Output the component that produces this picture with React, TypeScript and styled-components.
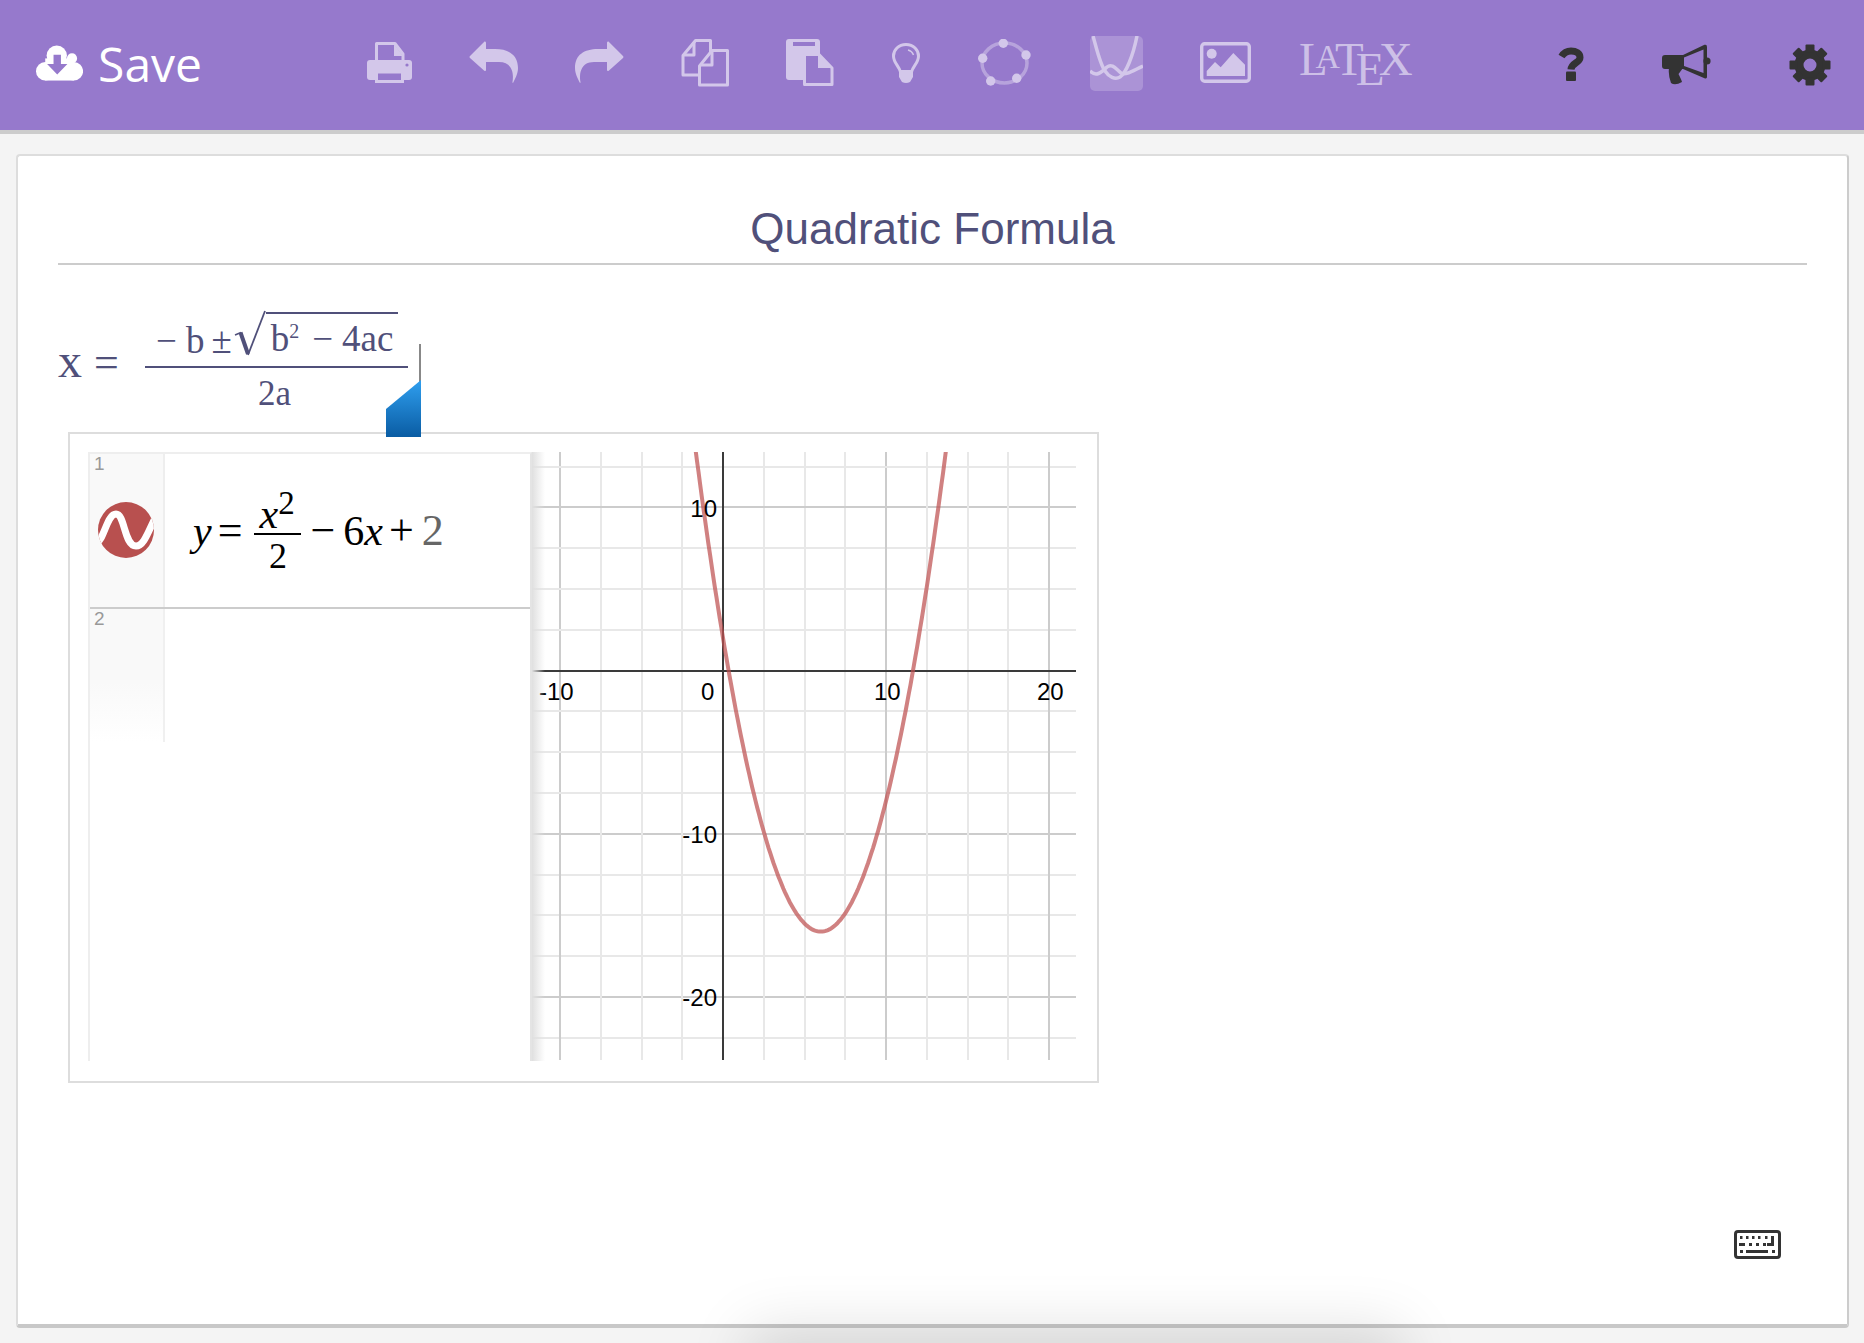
import React from "react";
import styled, { createGlobalStyle } from "styled-components";

const purple = "#9679cc";
const lightIcon = "#d3c7ea";
const darkIcon = "#333333";
const mathInk = "#50507a";

const GlobalStyle = createGlobalStyle`
  html, body {
    margin: 0;
    padding: 0;
    background: #f4f4f4;
    font-family: "Liberation Sans", Arial, sans-serif;
  }
`;

const Page = styled.div`
  position: relative;
  width: 1864px;
  height: 1343px;
  overflow: hidden;
  display: flex;
  flex-direction: column;
`;

const Toolbar = styled.header`
  display: flex;
  align-items: flex-start;
  box-sizing: border-box;
  height: 134px;
  flex-shrink: 0;
  padding-left: 36px;
  background: ${purple};
  border-bottom: 4px solid #cccccc;
`;

const SaveButton = styled.div`
  display: flex;
  align-items: center;
  width: 166px;
  height: 126px;
  color: #ffffff;
  font-family: "Open Sans", sans-serif;
  font-size: 48px;
  font-weight: 400;
  gap: 15px;
`;

const ToolIcon = styled.svg<{ $gap: number; $top: number; $flip?: boolean }>`
  display: block;
  flex-shrink: 0;
  margin-left: ${(p) => p.$gap}px;
  margin-top: ${(p) => p.$top}px;
  transform: ${(p) => (p.$flip ? "scaleX(-1)" : "none")};
`;

const LatexMark = styled.div`
  flex-shrink: 0;
  margin-left: 48px;
  margin-top: 31px;
  color: #cdc0e7;
  font-family: "Liberation Serif", serif;
  font-size: 47px;
  line-height: 52px;
  white-space: nowrap;
`;

const LatexA = styled.span`
  font-size: 0.72em;
  vertical-align: 0.2em;
  margin-left: -0.36em;
  margin-right: -0.15em;
`;

const LatexE = styled.span`
  display: inline-block;
  vertical-align: -0.22em;
  margin-left: -0.1667em;
  margin-right: -0.125em;
`;

const Card = styled.main`
  position: relative;
  box-sizing: border-box;
  width: 1833px;
  height: 1174px;
  margin: 20px 0 0 16px;
  padding: 0 40px;
  background: #ffffff;
  border: 2px solid #dddddd;
  border-right-color: #cccccc;
  border-bottom: 4px solid #c8c8c8;
  border-radius: 4px;
`;

const Title = styled.h1`
  box-sizing: border-box;
  height: 109px;
  margin: 0;
  padding-top: 48px;
  border-bottom: 2px solid #cccccc;
  color: ${mathInk};
  font-size: 44px;
  font-weight: 400;
  line-height: 50px;
  text-align: center;
`;

const MathLine = styled.div`
  position: relative;
  display: flex;
  align-items: flex-start;
  height: 167px;
  color: ${mathInk};
  font-family: "Liberation Serif", serif;
`;

const MathLead = styled.div`
  display: flex;
  align-items: baseline;
  gap: 12px;
  width: 87px;
  height: 50px;
  margin-top: 71px;
  line-height: 50px;
`;

const BigX = styled.span`
  font-size: 48px;
`;

const BigEquals = styled.span`
  font-size: 44px;
`;

const Fraction = styled.div`
  display: flex;
  flex-direction: column;
  align-items: stretch;
  width: 263px;
  margin-top: 46px;
`;

const Numerator = styled.div`
  display: flex;
  align-items: flex-start;
  box-sizing: border-box;
  height: 57px;
  padding-left: 11px;
  border-bottom: 2px solid ${mathInk};
  font-size: 37px;
  line-height: 48px;
`;

const NumTerm = styled.span<{ $gap?: number }>`
  margin-top: 6px;
  margin-left: ${(p) => p.$gap ?? 0}px;
`;

const Radical = styled.svg`
  display: block;
  margin-top: -1px;
  margin-left: 2px;
  flex-shrink: 0;
`;

const Radicand = styled.div`
  display: flex;
  box-sizing: border-box;
  width: 132px;
  height: 47px;
  margin-top: 1px;
  padding-left: 5px;
  border-top: 2px solid ${mathInk};
  white-space: nowrap;
  line-height: 50px;
`;

const RadSup = styled.span`
  font-size: 20px;
  line-height: 34px;
`;

const RadTerm = styled.span<{ $gap: number }>`
  margin-left: ${(p) => p.$gap}px;
`;

const Denominator = styled.div`
  text-align: center;
  font-size: 35px;
  line-height: 52px;
  padding-right: 4px;
`;

const Caret = styled.div`
  position: absolute;
  left: 361px;
  top: 79px;
  width: 2px;
  height: 38px;
  background: #888888;
`;

const Handle = styled.div`
  position: absolute;
  left: 328px;
  top: 115px;
  width: 35px;
  height: 57px;
  z-index: 2;
  background: linear-gradient(#2f9fef, #0a5ca3);
  clip-path: polygon(100% 0, 100% 100%, 0 100%, 0 51%);
`;

const GraphWidget = styled.section`
  display: flex;
  box-sizing: border-box;
  width: 1031px;
  height: 651px;
  margin-left: 10px;
  padding: 18px 20px 20px 18px;
  border: 2px solid #dddddd;
`;

const ExpressionList = styled.div`
  display: flex;
  flex-direction: column;
  box-sizing: border-box;
  width: 444px;
  flex-shrink: 0;
  border: solid #eeeeee;
  border-width: 2px 2px 0 2px;
  border-right-color: #e4e4e4;
`;

const ExpressionRow = styled.div<{ $grow?: boolean }>`
  display: flex;
  box-sizing: border-box;
  height: ${(p) => (p.$grow ? "auto" : "155px")};
  flex: ${(p) => (p.$grow ? "1" : "none")};
  border-bottom: ${(p) => (p.$grow ? "none" : "2px solid #cccccc")};
`;

const Gutter = styled.div<{ $fade?: boolean }>`
  position: relative;
  box-sizing: border-box;
  width: 75px;
  flex-shrink: 0;
  height: ${(p) => (p.$fade ? "133px" : "auto")};
  padding: 0 0 0 4px;
  color: #999999;
  font-size: 19px;
  line-height: 20px;
  background: ${(p) => (p.$fade ? "linear-gradient(#f9f9f9 55%, #ffffff)" : "#f9f9f9")};
  border-right: 2px solid ${(p) => (p.$fade ? "#f0f0f0" : "#eeeeee")};
`;

const FunctionBadge = styled.svg`
  position: absolute;
  left: 8px;
  top: 48px;
`;

const Equation = styled.div`
  display: flex;
  align-items: center;
  padding-left: 28px;
  color: #000000;
  font-family: "Liberation Serif", serif;
  font-size: 42px;
  line-height: 44px;
`;

const EqVar = styled.span<{ $gap?: number }>`
  font-style: italic;
  margin-left: ${(p) => p.$gap ?? 0}px;
`;

const EqDigit = styled.span<{ $gap: number }>`
  margin-left: ${(p) => p.$gap}px;
`;

const EqOp = styled.span<{ $gap?: number; $muted?: boolean }>`
  font-size: 44px;
  margin-left: ${(p) => p.$gap ?? 0}px;
  color: ${(p) => (p.$muted ? "#666666" : "inherit")};
`;

const EqFraction = styled.div`
  display: flex;
  flex-direction: column;
  align-items: center;
  width: 47px;
  margin-left: 12px;
  margin-right: 9px;
  padding-top: 4px;
`;

const EqTop = styled.div`
  box-sizing: border-box;
  width: 100%;
  height: 46px;
  padding-left: 5px;
  border-bottom: 2px solid #000000;
  white-space: nowrap;
  line-height: 50px;
`;

const EqSup = styled.span`
  font-size: 33px;
  vertical-align: 14px;
  line-height: 0;
`;

const EqBottom = styled.div`
  font-size: 36px;
  line-height: 42px;
`;

const GraphPanel = styled.div`
  position: relative;
  flex: 1;
  min-width: 0;
  &::before {
    content: "";
    position: absolute;
    left: 0;
    top: 0;
    bottom: 0;
    width: 13px;
    background: linear-gradient(to right, #e0e0e0, rgba(255, 255, 255, 0));
  }
`;

const ChartSvg = styled.svg`
  display: block;
`;

const KeyboardButton = styled.svg`
  position: absolute;
  right: 66px;
  bottom: 65px;
`;

const BottomGlow = styled.div`
  position: absolute;
  left: 770px;
  top: 1352px;
  width: 610px;
  height: 40px;
  box-shadow: 0 0 60px 22px rgba(0, 0, 0, 0.13);
  pointer-events: none;
`;

const CloudIcon = () => (
  <svg width="51" height="38" viewBox="0 0 51 38" fill="#ffffff">
    <circle cx="22.5" cy="11" r="11" />
    <circle cx="39" cy="14" r="5.5" />
    <circle cx="10" cy="28" r="10" />
    <circle cx="41" cy="28" r="10" />
    <rect x="10" y="14" width="31" height="24" />
    <path d="M19 10H27V20H34L23 31.5L12 20H19Z" fill={purple} />
  </svg>
);

const PrintIcon = () => (
  <ToolIcon $gap={165} $top={42} width="45" height="41" viewBox="0 0 45 41">
    <path d="M9.5 20V1.5H28L36 12V20" fill={purple} stroke={lightIcon} strokeWidth="3" strokeLinejoin="round" />
    <path d="M27 2V14H36Z" fill={lightIcon} />
    <rect x="0" y="18" width="45" height="20" rx="3" fill={lightIcon} />
    <rect x="9.5" y="30" width="26" height="9.5" fill={purple} stroke={lightIcon} strokeWidth="3" />
    <circle cx="40" cy="23" r="1.6" fill={purple} />
  </ToolIcon>
);

const arrowPath =
  "M15.5 .6Q17 0 17 2V8H26C40 8 49 14 49 27C49 33 46 38 44 42C43.6 42 43.4 41.6 43.5 41C45 32 43 21 30 21H17V28.500Q17 31 15 29.500L1 17Q0 16 1 15Z";

const ReplyIcon = ({ gap, flip }: { gap: number; flip?: boolean }) => (
  <ToolIcon $gap={gap} $top={41} $flip={flip} width="49" height="42" viewBox="0 0 49 42">
    <path d={arrowPath} fill={lightIcon} />
  </ToolIcon>
);

const CopyIcon = () => (
  <ToolIcon $gap={57} $top={39} width="49" height="48" viewBox="0 0 49 48" fill="none" stroke={lightIcon} strokeWidth="3" strokeLinejoin="round">
    <path d="M17 36H2V16.500L14.500 1.500H29.500V13" />
    <path d="M13 3V16H3" />
    <path d="M31 11.500H46.500V46H18.500V27Z" />
    <path d="M31 13V26H20" />
  </ToolIcon>
);

const PasteIcon = () => (
  <ToolIcon $gap={56} $top={39} width="48" height="48" viewBox="0 0 48 48">
    <rect x="0" y="0" width="34" height="41" rx="3" fill={lightIcon} />
    <rect x="7" y="3" width="22" height="4" fill={purple} />
    <path d="M18.500 15.500H33L46 29V45.500H18.500Z" fill={purple} stroke={lightIcon} strokeWidth="3" strokeLinejoin="round" />
    <path d="M32 15V29H46Z" fill={lightIcon} />
  </ToolIcon>
);

const BulbIcon = () => (
  <ToolIcon $gap={58} $top={42} width="28" height="41" viewBox="0 0 28 41">
    <path d="M14 2.500C6.500 2.500 1.500 8 1.500 14C1.500 21 7 24 8.500 30H19.500C21 24 26.500 21 26.500 14C26.500 8 21.500 2.500 14 2.500Z" fill="none" stroke={lightIcon} strokeWidth="3" />
    <path d="M7 28H21V35L18 40Q14 42 10 40L7 35Z" fill={lightIcon} />
    <path d="M16 8A8 8 0 0 1 21.500 13" fill="none" stroke={lightIcon} strokeWidth="1.500" />
  </ToolIcon>
);

const ringDots = [
  [25.3, 4.3],
  [48, 16],
  [38.7, 39.3],
  [12.7, 42],
  [4.7, 19.3],
];

const CircleIcon = () => (
  <ToolIcon $gap={58} $top={39} width="53" height="48" viewBox="0 0 53 48">
    <ellipse cx="26.500" cy="24" rx="22.500" ry="20" fill="none" stroke={lightIcon} strokeOpacity="0.55" strokeWidth="3.500" />
    {ringDots.map(([cx, cy]) => (
      <circle key={cx} cx={cx} cy={cy} r="4.700" fill={lightIcon} />
    ))}
  </ToolIcon>
);

const GraphToggleIcon = () => (
  <ToolIcon $gap={59} $top={36} width="53" height="55" viewBox="0 0 53 55">
    <rect width="53" height="55" rx="5" fill="#ffffff" opacity="0.2" />
    <g fill="none" stroke={lightIcon} strokeWidth="3.500">
      <path d="M3 0C7 14 10 28 15 35C19 41 25 44 30 41C36 37 43 20 47 0" />
      <path d="M0 35C6 41 11 37 17 31C22 27 26 33 31 37C36 40 44 34 53 30" />
    </g>
  </ToolIcon>
);

const ImageIcon = () => (
  <ToolIcon $gap={57} $top={42} width="51" height="41" viewBox="0 0 51 41">
    <rect x="1.700" y="1.700" width="47.600" height="37.600" rx="3" fill="none" stroke={lightIcon} strokeWidth="3.400" />
    <circle cx="11.700" cy="11.700" r="5" fill={lightIcon} />
    <path d="M6.700 34V29L15 20L20.700 25.300L33.300 11L45 22.700V34Z" fill={lightIcon} />
  </ToolIcon>
);

const QuestionIcon = () => (
  <ToolIcon $gap={145} $top={47} width="26" height="34" viewBox="0 0 26 34">
    <path d="M3.500 9.500C6 5.500 9 4 13 4C18 4 22 6.500 22 10.500C22 16 13.500 15.500 13 22.500" fill="none" stroke={darkIcon} strokeWidth="7" />
    <rect x="8" y="24.500" width="10" height="9.500" rx="1" fill={darkIcon} />
  </ToolIcon>
);

const BullhornIcon = () => (
  <ToolIcon $gap={78} $top={44} width="49" height="41" viewBox="0 0 49 41">
    <path d="M3 11H21L42.500 .8Q45 0 45 3V33Q45 35 42.500 34.200L21 25H3Q0 25 0 22V14Q0 11 3 11Z" fill={darkIcon} />
    <path d="M7 24H21L16.500 30Q20 37 20 38Q13 42 9 39Q6 31 7 24Z" fill={darkIcon} />
    <path d="M22 13.500L41.500 5.500V29L22 22Z" fill={purple} />
    <circle cx="45" cy="17" r="3.600" fill={darkIcon} />
  </ToolIcon>
);

const gearTeeth = [0, 45, 90, 135, 180, 225, 270, 315];

const GearIcon = () => (
  <ToolIcon $gap={78} $top={44} width="42" height="42" viewBox="0 0 42 42">
    <circle cx="21" cy="21" r="11" fill="none" stroke={darkIcon} strokeWidth="9" />
    {gearTeeth.map((angle) => (
      <rect key={angle} x="16.500" y="0.500" width="9" height="8" rx="1" fill={darkIcon} transform={`rotate(${angle} 21 21)`} />
    ))}
  </ToolIcon>
);

const RadicalSign = () => (
  <Radical width="32" height="50" viewBox="0 0 32 50" fill="none" stroke={mathInk}>
    <path d="M1 25L7 22.500" strokeWidth="1.500" />
    <path d="M6.500 22.500L14 44" strokeWidth="4" />
    <path d="M14 45L31 1" strokeWidth="1.800" />
  </Radical>
);

const Badge = () => (
  <FunctionBadge width="56" height="56" viewBox="0 0 56 56">
    <defs>
      <clipPath id="badge-clip">
        <circle cx="28" cy="28" r="28" />
      </clipPath>
    </defs>
    <circle cx="28" cy="28" r="28" fill="#b8504f" />
    <path
      d="M-2 42C6 38 9 12 18 12C27 12 26 44 38 44C46 44 50 30 58 14"
      fill="none"
      stroke="#ffffff"
      strokeWidth="7"
      clipPath="url(#badge-clip)"
    />
  </FunctionBadge>
);

const keyRows: [number, number, number, number][] = [
  [6, 6, 2.500, 3],
  [12, 6, 2.500, 3],
  [18, 6, 2.500, 3],
  [24, 6, 2.500, 3],
  [31, 6, 2.500, 3],
  [5, 13, 6, 3],
  [15, 13, 3, 3],
  [22, 13, 3, 3],
  [29, 13, 3, 3],
  [37, 6, 3, 10],
  [33, 13, 5, 3],
  [6, 20, 3, 3],
  [12, 20, 22, 3],
  [38, 20, 3, 3],
];

const KeyboardIcon = () => (
  <KeyboardButton width="47" height="29" viewBox="0 0 47 29">
    <rect x="1.500" y="1.500" width="44" height="26" rx="2.500" fill="#ffffff" stroke={darkIcon} strokeWidth="3" />
    {keyRows.map(([x, y, w, h]) => (
      <rect key={`${x}-${y}`} x={x} y={y} width={w} height={h} fill={darkIcon} />
    ))}
  </KeyboardButton>
);

// chart geometry, measured off the reference
const chartWidth = 544;
const chartHeight = 608;
const originX = 191;
const originY = 218.5;
const unitX = 16.3;
const unitY = 16.32;

const toX = (v: number) => Math.round(originX + v * unitX);
const toY = (v: number) => Math.round(originY - v * unitY);

const gridSteps = Array.from({ length: 25 }, (_, i) => (i - 12) * 2.5);

const curvePoints = Array.from({ length: 181 }, (_, i) => {
  const x = -3 + i * 0.1;
  const y = (x * x) / 2 - 6 * x + 2;
  return `${(originX + x * unitX).toFixed(1)},${(originY - y * unitY).toFixed(1)}`;
}).join(" ");

const xLabels = [
  { v: -10, label: "-10", x: 7 },
  { v: 0, label: "0", x: 169 },
  { v: 10, label: "10", x: 342 },
  { v: 20, label: "20", x: 505 },
];

const yLabels = [
  { label: "10", y: 65 },
  { label: "-10", y: 391 },
  { label: "-20", y: 554 },
];

const Chart = () => (
  <ChartSvg width={chartWidth} height={chartHeight} viewBox={`0 0 ${chartWidth} ${chartHeight}`}>
    <g strokeWidth="2" shapeRendering="crispEdges">
      {gridSteps.map((step) => {
        const major = step % 10 === 0;
        return (
          <React.Fragment key={step}>
            <line x1={toX(step)} x2={toX(step)} y1="0" y2={chartHeight} stroke={major ? "#cccccc" : "#e8e8e8"} />
            <line x1="0" x2={chartWidth} y1={toY(step)} y2={toY(step)} stroke={major ? "#cccccc" : "#e8e8e8"} />
          </React.Fragment>
        );
      })}
      <line x1={toX(0)} x2={toX(0)} y1="0" y2={chartHeight} stroke="#3a3a3a" />
      <line x1="0" x2={chartWidth} y1={toY(0)} y2={toY(0)} stroke="#3a3a3a" />
    </g>
    <polyline points={curvePoints} fill="none" stroke="#be5050" strokeOpacity="0.72" strokeWidth="4" />
    <g fontFamily="'Liberation Sans', sans-serif" fontSize="24" fill="#000000">
      {xLabels.map((l) => (
        <text key={l.v} x={l.x} y="248">
          {l.label}
        </text>
      ))}
      {yLabels.map((l) => (
        <text key={l.label} x="185" y={l.y} textAnchor="end">
          {l.label}
        </text>
      ))}
    </g>
  </ChartSvg>
);

const App = () => (
  <Page>
    <GlobalStyle />
    <Toolbar>
      <SaveButton>
        <CloudIcon />
        <span>Save</span>
      </SaveButton>
      <PrintIcon />
      <ReplyIcon gap={57} />
      <ReplyIcon gap={57} flip />
      <CopyIcon />
      <PasteIcon />
      <BulbIcon />
      <CircleIcon />
      <GraphToggleIcon />
      <ImageIcon />
      <LatexMark>
        L<LatexA>A</LatexA>T<LatexE>E</LatexE>X
      </LatexMark>
      <QuestionIcon />
      <BullhornIcon />
      <GearIcon />
    </Toolbar>
    <Card>
      <Title>Quadratic Formula</Title>
      <MathLine>
        <MathLead>
          <BigX>x</BigX>
          <BigEquals>=</BigEquals>
        </MathLead>
        <Fraction>
          <Numerator>
            <NumTerm>−</NumTerm>
            <NumTerm $gap={9}>b</NumTerm>
            <NumTerm $gap={7}>±</NumTerm>
            <RadicalSign />
            <Radicand>
              b<RadSup>2</RadSup>
              <RadTerm $gap={13}>−</RadTerm>
              <RadTerm $gap={9}>4ac</RadTerm>
            </Radicand>
          </Numerator>
          <Denominator>2a</Denominator>
        </Fraction>
        <Caret />
        <Handle />
      </MathLine>
      <GraphWidget>
        <ExpressionList>
          <ExpressionRow>
            <Gutter>
              1
              <Badge />
            </Gutter>
            <Equation>
              <EqVar>y</EqVar>
              <EqOp $gap={6}>=</EqOp>
              <EqFraction>
                <EqTop>
                  <EqVar>x</EqVar>
                  <EqSup>2</EqSup>
                </EqTop>
                <EqBottom>2</EqBottom>
              </EqFraction>
              <EqOp>−</EqOp>
              <EqDigit $gap={8}>6</EqDigit>
              <EqVar>x</EqVar>
              <EqOp $gap={6}>+</EqOp>
              <EqOp $gap={8} $muted>
                2
              </EqOp>
            </Equation>
          </ExpressionRow>
          <ExpressionRow $grow>
            <Gutter $fade>2</Gutter>
          </ExpressionRow>
        </ExpressionList>
        <GraphPanel>
          <Chart />
        </GraphPanel>
      </GraphWidget>
      <KeyboardIcon />
    </Card>
    <BottomGlow />
  </Page>
);

export default App;
